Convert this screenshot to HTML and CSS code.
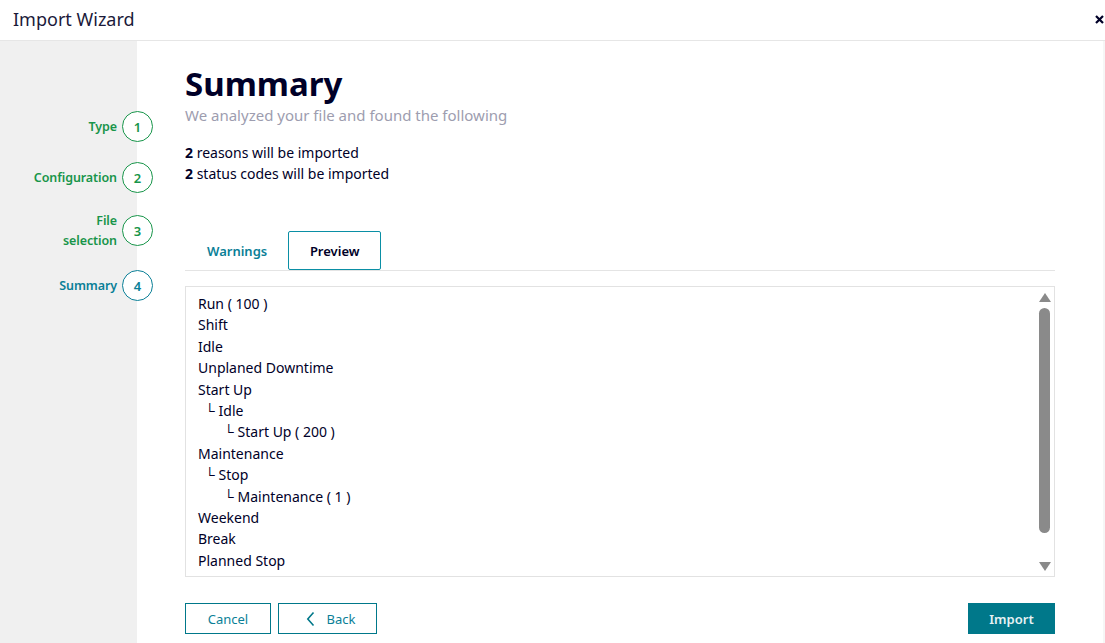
FILE: index.html
```html
<!DOCTYPE html>
<html lang="en">
<head>
    <meta charset="UTF-8">
    <title>Import Wizard</title>
    <link rel="stylesheet" href="styles.css">
</head>
<body>
    <div class="dialog">
        <div class="header">
            <span class="title">Import Wizard</span>
            <button class="close" aria-label="Close">
                <svg width="9" height="9" viewBox="0 0 9 9"><path d="M1 1 L8 8 M8 1 L1 8" stroke="#000028" stroke-width="2.2"/></svg>
            </button>
        </div>

        <div class="body">
            <div class="steps">
                <div class="step done"><span class="label">Type</span><span class="num">1</span></div>
                <div class="step done"><span class="label">Configuration</span><span class="num">2</span></div>
                <div class="step done two-line"><span class="label">File<br>selection</span><span class="num">3</span></div>
                <div class="step active last"><span class="label">Summary</span><span class="num">4</span></div>
            </div>

            <div class="content">
                <h1>Summary</h1>
                <p class="subtitle">We analyzed your file and found the following</p>
                <div class="counts">
                    <div><b>2</b> reasons will be imported</div>
                    <div><b>2</b> status codes will be imported</div>
                </div>

                <div class="tabs">
                    <div class="tab">Warnings</div>
                    <div class="tab selected">Preview</div>
                </div>

                <div class="preview">
                    <ul class="tree">
                        <li>Run ( 100 )</li>
                        <li>Shift</li>
                        <li>Idle</li>
                        <li>Unplaned Downtime</li>
                        <li>Start Up</li>
                        <li class="l1">└ Idle</li>
                        <li class="l2">└ Start Up ( 200 )</li>
                        <li>Maintenance</li>
                        <li class="l1">└ Stop</li>
                        <li class="l2">└ Maintenance ( 1 )</li>
                        <li>Weekend</li>
                        <li>Break</li>
                        <li>Planned Stop</li>
                    </ul>
                    <div class="scrollbar">
                        <span class="arrow up"></span>
                        <span class="thumb"></span>
                        <span class="arrow down"></span>
                    </div>
                </div>

                <div class="footer">
                    <button class="secondary">Cancel</button>
                    <button class="secondary back">
                        <svg width="9" height="16" viewBox="0 0 9 16"><path d="M7.5 1.5 L1.8 8 L7.5 14.5" fill="none" stroke="#00788a" stroke-width="1.6"/></svg>
                        Back
                    </button>
                    <span class="spacer"></span>
                    <button class="primary">Import</button>
                </div>
            </div>
        </div>
    </div>
</body>
</html>
```

FILE: styles.css
```css
body {
    font-family: "Noto Sans", "Open Sans", sans-serif;
    margin: 0;
    background: white;
    color: #000028;
}
.dialog {
    width: 1105px;
    height: 643px;
    display: flex;
    flex-direction: column;
    overflow: hidden;
}
.header {
    height: 40px;
    border-bottom: 1px solid #e6e6e6;
    display: flex;
    align-items: center;
    justify-content: space-between;
    padding: 0 1px 0 13px;
}
.title {
    font-size: 18px;
    color: #1b1a3a;
    margin-top: -2px;
}
.close {
    background: none;
    border: none;
    padding: 0;
    width: 9px;
    height: 9px;
    margin-bottom: 1px;
    display: flex;
    align-items: center;
    cursor: pointer;
}
.body {
    flex: 1;
    display: flex;
}
.steps {
    width: 137px;
    background: #f0f0f0;
    display: flex;
    flex-direction: column;
    padding-top: 70px;
    gap: 20px;
}
.step {
    display: flex;
    align-items: center;
    justify-content: flex-end;
    gap: 5px;
    margin-right: -16px;
    height: 31px;
}
.step.two-line { margin-top: 2px; }
.step.last { margin-top: 4px; }
.step .label {
    font-size: 12.5px;
    font-weight: 600;
    text-align: right;
    line-height: 20px;
    letter-spacing: -0.1px;
}
.step .num {
    width: 29px;
    height: 29px;
    border-radius: 50%;
    background: white;
    border: 1px solid #18954a;
    display: flex;
    align-items: center;
    justify-content: center;
    font-size: 13px;
    font-weight: 600;
}
.step.done .label, .step.done .num {
    color: #18954a;
}
.step.active .label, .step.active .num {
    color: #0a7f97;
    border-color: #0a7f97;
}
.content {
    flex: 1;
    padding: 23px 48px 0 48px;
    display: flex;
    flex-direction: column;
    border-right: 2px solid #f6f6f6;
}
h1 {
    font-size: 33px;
    font-weight: 700;
    margin: 0;
    line-height: 40px;
    color: #000028;
}
.subtitle {
    margin: 1px 0 0;
    font-size: 15px;
    color: #9d9daf;
    line-height: 20px;
}
.counts {
    margin-top: 17px;
    font-size: 14px;
    line-height: 21px;
    color: #000028;
}
.tabs {
    margin-top: 47px;
    display: flex;
    border-bottom: 1px solid #e4e4e4;
    height: 39px;
}
.tab {
    font-size: 13px;
    font-weight: 600;
    color: #0a7f97;
    padding: 0 22px;
    display: flex;
    align-items: center;
}
.tab.selected {
    color: #000028;
    border: 1px solid #0a8fa5;
    border-radius: 2px;
    width: 93px;
    box-sizing: border-box;
    justify-content: center;
    padding: 0;
    margin-left: -1px;
}
.preview {
    margin-top: 15px;
    height: 291px;
    box-sizing: border-box;
    border: 1px solid #e2e2e2;
    display: flex;
}
.tree {
    flex: 1;
    list-style: none;
    margin: 0;
    padding: 6px 12px;
    font-size: 14px;
    line-height: 21.4px;
    color: #000028;
}
.tree .l1 { padding-left: 7px; }
.tree .l2 { padding-left: 26px; }
.scrollbar {
    width: 17px;
    display: flex;
    flex-direction: column;
    align-items: center;
    padding: 6px 0 5px;
    margin-right: 1px;
}
.arrow {
    width: 0;
    height: 0;
    border-left: 6px solid transparent;
    border-right: 6px solid transparent;
}
.arrow.up { border-bottom: 9px solid #8a8a8a; }
.arrow.down { border-top: 9px solid #8a8a8a; }
.thumb {
    width: 11px;
    flex: 1;
    margin: 6px 0 29px;
    background: #8a8a8a;
    border-radius: 6px;
}
.footer {
    margin-top: 26px;
    display: flex;
    gap: 7px;
}
.spacer { flex: 1; }
button {
    font-family: inherit;
    font-size: 13px;
    height: 31px;
    cursor: pointer;
}
.secondary {
    background: white;
    color: #0a7f97;
    border: 1px solid #00788a;
    width: 86px;
}
.back {
    width: 99px;
    display: flex;
    align-items: center;
    justify-content: center;
    gap: 12px;
    padding: 0 0 0 6px;
}
.primary {
    background: #00788a;
    color: #e6f2f4;
    border: none;
    width: 87px;
    font-weight: 600;
}
```
